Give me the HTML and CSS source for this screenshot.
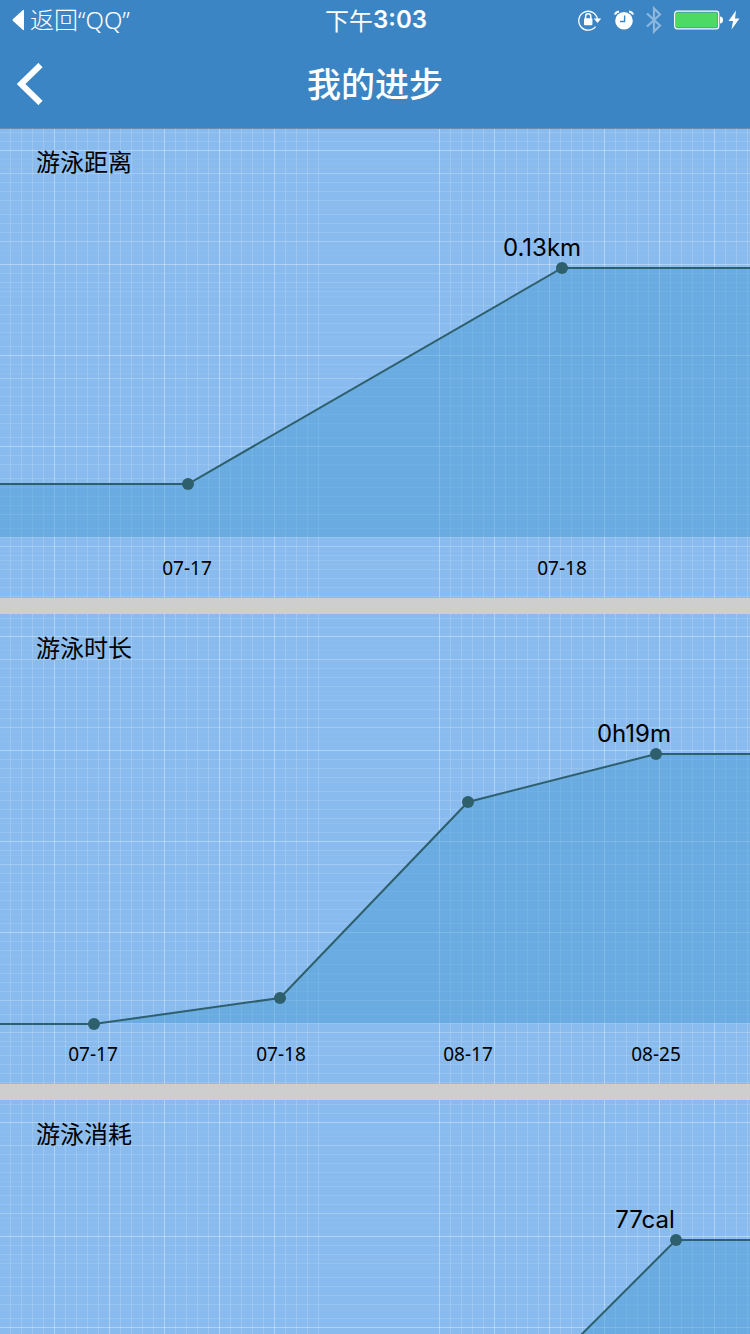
FILE: index.html
```html
<!DOCTYPE html>
<html lang="zh-CN">
<head>
<meta charset="utf-8">
<meta name="viewport" content="width=device-width, initial-scale=1">
<title>我的进步</title>
<link rel="stylesheet" href="styles.css">
</head>
<body>
<div class="app">
  <header class="top">
    <div class="status">
      <a class="return" href="#">
        <svg width="12" height="22" viewBox="0 0 12 22" aria-hidden="true"><path d="M12 1.5v19q0 1-1 .5L1 12q-1-1 0-2L11 1q1-.5 1 .5z" fill="#fff"/></svg>
        <span>返回“QQ”</span>
      </a>
      <time class="clock">下午<span class="digits">3:03</span></time>
      <div class="indicators">
        <svg width="24" height="22" viewBox="0 0 24 22" aria-hidden="true">
          <path d="M17.500 17.600A9.400 9.400 0 1 1 19.400 10" fill="none" stroke="#fff" stroke-width="1.300"/>
          <path d="M15.800 9.600h7.400l-3.700 4.300z" fill="#fff"/>
          <rect x="6" y="9.200" width="8.400" height="7" rx="1" fill="#fff"/>
          <path d="M7.600 10V7.400a2.600 2.600 0 0 1 5.200 0V10" fill="none" stroke="#fff" stroke-width="1.500"/>
        </svg>
        <svg width="20" height="20" viewBox="0 0 20 20" aria-hidden="true">
          <circle cx="10" cy="10.800" r="8.800" fill="#fff"/>
          <path d="M1 4.600Q1.600 1.800 5 1.400M19 4.600Q18.400 1.800 15 1.400" fill="none" stroke="#fff" stroke-width="2"/>
          <path d="M10.600 5.500v6H6" fill="none" stroke="#3c85c4" stroke-width="1.400"/>
        </svg>
        <svg width="16" height="28" viewBox="0 0 16 28" aria-hidden="true"><path d="M1 7.500 14 19.500 8 25.500V2.500L14 8.500 1 20.500" fill="none" stroke="#8cb7df" stroke-width="2.200"/></svg>
        <span class="power">
          <svg width="50" height="20" viewBox="0 0 50 20" aria-hidden="true">
            <rect x=".7" y="1.200" width="44" height="17.600" rx="2.500" fill="none" stroke="#fff" stroke-width="1.300"/>
            <rect x="2" y="2.500" width="41.500" height="15" rx="1" fill="#4cd964"/>
            <path d="M46 6.500q3 .4 3 3.500t-3 3.500z" fill="#fff"/>
          </svg>
          <svg width="12" height="20" viewBox="0 0 12 20" aria-hidden="true"><path d="M8 .5.5 11H5L3.500 19.500 11.500 8.500H7z" fill="#fff"/></svg>
        </span>
      </div>
    </div>
    <div class="nav">
      <button class="back" type="button" aria-label="返回">
        <svg width="26" height="42" viewBox="0 0 26 42" aria-hidden="true"><path d="M23.500 2 4 21l19.500 19" fill="none" stroke="#fff" stroke-width="6"/></svg>
      </button>
      <h1 class="title">我的进步</h1>
    </div>
  </header>

  <main class="cards">
    <section class="card">
      <h2 class="name">游泳距离</h2>
      <svg class="chart" viewBox="0 0 750 470" role="img" aria-label="游泳距离">
        <defs>
          <g id="grid" fill="none" stroke="#fff">
            <path stroke-opacity=".16" d="M10.500 0V470M21.500 0V470M32.500 0V470M43.500 0V470M65.500 0V470M76.500 0V470M87.500 0V470M98.500 0V470M120.500 0V470M131.500 0V470M142.500 0V470M153.500 0V470M175.500 0V470M186.500 0V470M197.500 0V470M208.500 0V470M230.500 0V470M241.500 0V470M252.500 0V470M263.500 0V470M285.500 0V470M296.500 0V470M307.500 0V470M318.500 0V470M450.500 0V470M461.500 0V470M472.500 0V470M483.500 0V470M505.500 0V470M516.500 0V470M527.500 0V470M538.500 0V470M560.500 0V470M571.500 0V470M582.500 0V470M593.500 0V470M615.500 0V470M626.500 0V470M637.500 0V470M648.500 0V470M670.500 0V470M681.500 0V470M692.500 0V470M703.500 0V470M725.500 0V470M736.500 0V470M747.500 0V470"/>
            <path stroke-opacity=".34" d="M54.500 0V470M109.500 0V470M164.500 0V470M219.500 0V470M274.500 0V470M439.500 0V470M494.500 0V470M549.500 0V470M604.500 0V470M659.500 0V470M714.500 0V470"/>
            <path stroke-opacity=".12" d="M0 4.500H750M0 13.500H750M0 54.500H750M0 63.500H750M0 72.500H750M0 86.500H750M0 95.500H750M0 104.500H750M0 145.500H750M0 154.500H750M0 163.500H750M0 177.500H750M0 186.500H750M0 195.500H750M0 204.500H750M0 218.500H750M0 236.500H750M0 259.500H750M0 268.500H750M0 277.500H750M0 286.500H750M0 295.500H750M0 309.500H750M0 327.500H750M0 336.500H750M0 350.500H750M0 359.500H750M0 368.500H750M0 377.500H750M0 400.500H750M0 409.500H750M0 427.500H750M0 432.500H750M0 441.500H750M0 450.500H750M0 459.500H750M0 468.500H750"/>
            <path stroke-opacity=".05" d="M0 31.500H750M0 36.500H750M0 40.500H750M0 77.500H750M0 81.500H750M0 118.500H750M0 122.500H750M0 127.500H750M0 159.500H750M0 168.500H750M0 209.500H750M0 241.500H750M0 245.500H750M0 300.500H750M0 341.500H750M0 391.500H750M0 423.500H750M0 436.500H750"/>
            <path stroke-opacity=".22" d="M0 45.500H750M0 113.500H750M0 250.500H750M0 386.500H750M0 418.500H750"/>
            <path stroke-opacity=".34" d="M0 22.500H750M0 136.500H750M0 227.500H750M0 318.500H750"/>
          </g>
        </defs>
        <use href="#grid"/>
        <path class="area" d="M0 356H188L562 140H750V409H0z"/>
        <path class="line" d="M0 356H188L562 140H750"/>
        <circle class="dot" cx="188" cy="356" r="6"/>
        <circle class="dot" cx="562" cy="140" r="6"/>
        <text class="value" x="542" y="128">0.13km</text>
        <text class="date" x="187" y="447">07-17</text>
        <text class="date" x="562" y="447">07-18</text>
      </svg>
    </section>

    <section class="card">
      <h2 class="name">游泳时长</h2>
      <svg class="chart" viewBox="0 0 750 470" role="img" aria-label="游泳时长">
        <use href="#grid"/>
        <path class="area" d="M94 409 280 384 468 188 656 140H750V409z"/>
        <path class="line" d="M0 410H94L280 384 468 188 656 140H750"/>
        <circle class="dot" cx="94" cy="410" r="6"/>
        <circle class="dot" cx="280" cy="384" r="6"/>
        <circle class="dot" cx="468" cy="188" r="6"/>
        <circle class="dot" cx="656" cy="140" r="6"/>
        <text class="value" x="634" y="128">0h19m</text>
        <text class="date" x="93" y="447">07-17</text>
        <text class="date" x="281" y="447">07-18</text>
        <text class="date" x="468" y="447">08-17</text>
        <text class="date" x="656" y="447">08-25</text>
      </svg>
    </section>

    <section class="card">
      <h2 class="name">游泳消耗</h2>
      <svg class="chart" viewBox="0 0 750 470" role="img" aria-label="游泳消耗">
        <use href="#grid"/>
        <path class="area" d="M406 409 676 140H750V409z"/>
        <path class="line" d="M0 410H406L676 140H750"/>
        <circle class="dot" cx="676" cy="140" r="6"/>
        <text class="value" x="645" y="128">77cal</text>
      </svg>
    </section>
  </main>
</div>
</body>
</html>
```

FILE: styles.css
```css
* {
  box-sizing: border-box;
}

body {
  margin: 0;
  font-family: "Noto Sans CJK SC", sans-serif;
  color: #000;
}

.app {
  display: flex;
  flex-direction: column;
  height: 100vh;
  background: #cecece;
}

.top {
  flex: none;
  z-index: 2;
  background: #3c85c4;
  box-shadow: 0 1px 0 #6c8cae;
  color: #fff;
}

.status {
  display: grid;
  grid-template-columns: 1fr auto 1fr;
  align-items: center;
  height: 40px;
  padding: 0 10px 0 12px;
  font-size: 24px;
  line-height: 40px;
}

.return {
  display: flex;
  align-items: center;
  gap: 6px;
  color: inherit;
  font-family: "Noto Sans", "Noto Sans CJK SC", sans-serif;
  font-weight: 300;
  text-decoration: none;
}

.clock {
  display: flex;
}

.digits {
  font-family: Inter, sans-serif;
  font-weight: 600;
}

.indicators {
  display: flex;
  align-items: center;
  justify-content: flex-end;
  gap: 12px;
}

.power {
  display: flex;
  align-items: center;
  gap: 4px;
}

.nav {
  display: grid;
  grid-template-columns: 60px 1fr 60px;
  align-items: center;
  height: 88px;
}

.back {
  display: flex;
  padding: 0 0 0 17px;
  border: 0;
  background: none;
}

.title {
  margin: 0;
  padding-bottom: 2px;
  font-size: 34px;
  line-height: 48px;
  font-weight: 500;
  text-align: center;
}

.cards {
  flex: 1;
  display: flex;
  flex-direction: column;
  gap: 16px;
  min-height: 0;
  overflow-y: auto;
  scrollbar-width: none;
}

.card {
  display: grid;
  flex: none;
  background: #89bbee;
}

.name,
.chart {
  grid-area: 1 / 1;
}

.name {
  z-index: 1;
  margin: 0;
  padding: 15px 36px;
  font-size: 24px;
  line-height: 36px;
  font-weight: 400;
}

.chart {
  display: block;
  width: 100%;
  height: auto;
}

.area {
  fill: #4b9dd6;
  fill-opacity: 0.5;
}

.line {
  fill: none;
  stroke: #2e5f6c;
  stroke-width: 2;
}

.dot {
  fill: #2e5f6c;
}

.value {
  font-family: Inter, sans-serif;
  font-size: 24px;
  text-anchor: middle;
}

.date {
  font-family: "Noto Sans", sans-serif;
  font-size: 19px;
  text-anchor: middle;
}
```
